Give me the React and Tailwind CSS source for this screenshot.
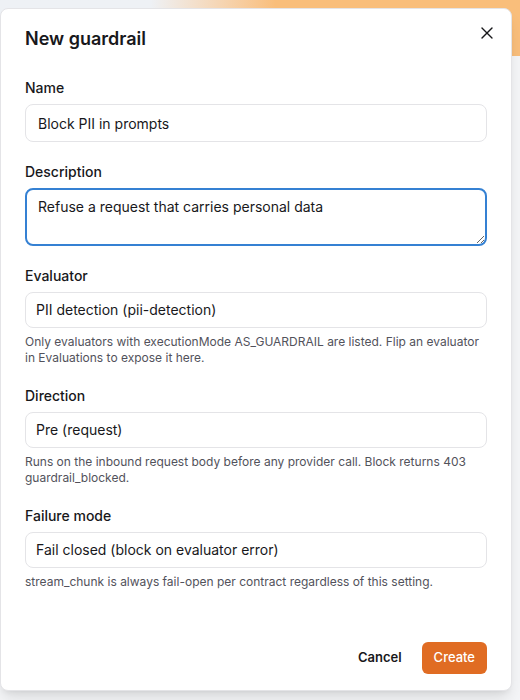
import { X } from 'lucide-react';

const font = { fontFamily: 'Inter, "Noto Sans", sans-serif' };

function Field({ label, children, hint }) {
  return (
    <div>
      <label className="mb-1.5 block text-sm font-medium leading-5 text-[#18181b]">{label}</label>
      {children}
      {hint && <p className="mt-1.5 text-xs leading-4 text-[#52525b]">{hint}</p>}
    </div>
  );
}

function SelectBox({ value }) {
  return (
    <div className="flex h-9 items-center rounded-lg border border-[#e4e4e7] bg-white px-2.5 text-sm text-[#18181b]">
      {value}
    </div>
  );
}

export default function App() {
  return (
    <div className="relative h-[700px] w-full overflow-hidden bg-[#f4f5f7]" style={font}>
      {/* page header band behind the modal */}
      <div className="h-[56px] bg-gradient-to-r from-[#eef1f5] from-[29%] to-[#f9be7b] to-[53%]" />

      {/* modal */}
      <div className="absolute left-0 top-2 flex h-[683px] w-[512px] flex-col rounded-lg border border-[#e4e4e7] bg-white px-6 pb-4 pt-4 shadow-lg">
        <button className="absolute right-[14px] top-[14px] text-[#18181b]">
          <X size={20} strokeWidth={1.6} />
        </button>

        <h2 className="text-lg font-semibold leading-7 text-[#18181b]">New guardrail</h2>

        <div className="mt-[25px] flex flex-col gap-5">
          <Field label="Name">
            <input
              readOnly
              value="Block PII in prompts"
              className="h-[38px] w-full rounded-lg border border-[#e4e4e7] bg-white px-3 text-sm text-[#18181b] outline-none"
            />
          </Field>

          <Field label="Description">
            <textarea
              rows={2}
              readOnly
              value="Refuse a request that carries personal data"
              className="block h-[58px] w-full rounded-lg border-2 border-[#3581d3] bg-white px-[11px] py-[7px] text-sm leading-5 text-[#18181b] outline-none"
            />
          </Field>

          <Field
            label="Evaluator"
            hint="Only evaluators with executionMode AS_GUARDRAIL are listed. Flip an evaluator in Evaluations to expose it here."
          >
            <SelectBox value="PII detection (pii-detection)" />
          </Field>

          <Field
            label="Direction"
            hint="Runs on the inbound request body before any provider call. Block returns 403 guardrail_blocked."
          >
            <SelectBox value="Pre (request)" />
          </Field>

          <Field
            label="Failure mode"
            hint="stream_chunk is always fail-open per contract regardless of this setting."
          >
            <SelectBox value="Fail closed (block on evaluator error)" />
          </Field>
        </div>

        <div className="mt-auto flex justify-end gap-2">
          <button className="h-8 rounded-md px-3 text-[13px] font-semibold text-[#18181b]">Cancel</button>
          <button className="h-8 rounded-md bg-[#e06c23] px-3 text-[13px] font-medium text-white">Create</button>
        </div>
      </div>
    </div>
  );
}
